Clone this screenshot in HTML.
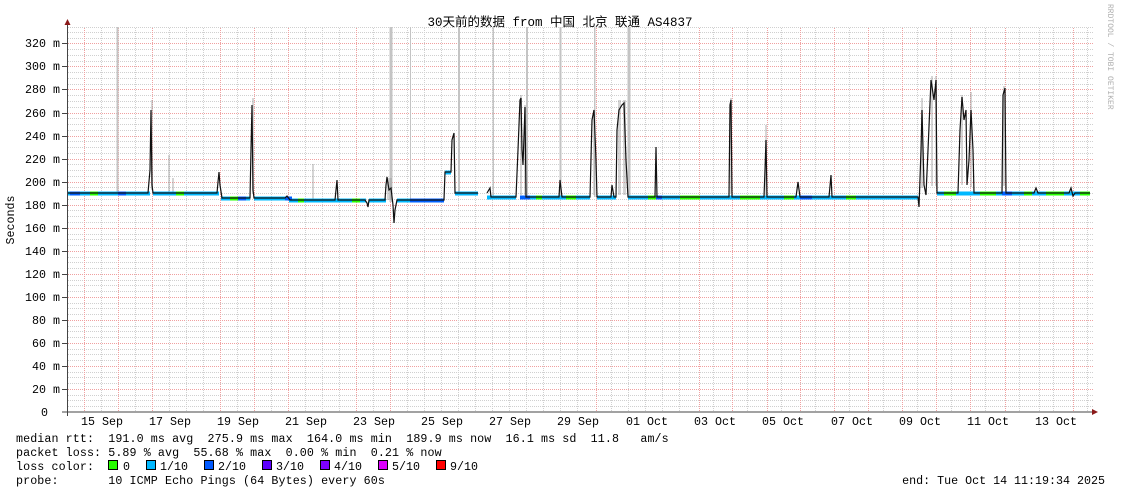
<!DOCTYPE html>
<html><head><meta charset="utf-8"><style>
html,body{margin:0;padding:0;background:#fff;}
svg{display:block}
text{font-family:"Liberation Mono","DejaVu Sans Mono","Noto Sans CJK SC",monospace;font-size:11.67px;fill:#000}
.lg{letter-spacing:0.1px}
</style></head><body>
<svg width="1121" height="494" viewBox="0 0 1121 494" xmlns="http://www.w3.org/2000/svg">
<defs>
<pattern id="hg" width="2" height="1" patternUnits="userSpaceOnUse"><rect width="1" height="1" fill="#d0d0d0"/></pattern>
<pattern id="vg" width="1" height="2" patternUnits="userSpaceOnUse"><rect width="1" height="1" fill="#d0d0d0"/></pattern>
<pattern id="hr" width="2" height="1" patternUnits="userSpaceOnUse"><rect width="1" height="1" fill="#f0a0a0"/></pattern>
<pattern id="vr" width="1" height="2" patternUnits="userSpaceOnUse"><rect width="1" height="1" fill="#f0a0a0"/></pattern>
</defs>
<g id="grid">
<g fill="url(#hg)">
<rect x="67" y="406" width="1026" height="1"/><rect x="67" y="400" width="1026" height="1"/><rect x="67" y="395" width="1026" height="1"/>
<rect x="67" y="383" width="1026" height="1"/><rect x="67" y="377" width="1026" height="1"/><rect x="67" y="372" width="1026" height="1"/>
<rect x="67" y="360" width="1026" height="1"/><rect x="67" y="354" width="1026" height="1"/><rect x="67" y="349" width="1026" height="1"/>
<rect x="67" y="337" width="1026" height="1"/><rect x="67" y="331" width="1026" height="1"/><rect x="67" y="326" width="1026" height="1"/>
<rect x="67" y="314" width="1026" height="1"/><rect x="67" y="308" width="1026" height="1"/><rect x="67" y="303" width="1026" height="1"/>
<rect x="67" y="291" width="1026" height="1"/><rect x="67" y="285" width="1026" height="1"/><rect x="67" y="280" width="1026" height="1"/>
<rect x="67" y="268" width="1026" height="1"/><rect x="67" y="262" width="1026" height="1"/><rect x="67" y="257" width="1026" height="1"/>
<rect x="67" y="245" width="1026" height="1"/><rect x="67" y="239" width="1026" height="1"/><rect x="67" y="234" width="1026" height="1"/>
<rect x="67" y="222" width="1026" height="1"/><rect x="67" y="216" width="1026" height="1"/><rect x="67" y="210" width="1026" height="1"/>
<rect x="67" y="199" width="1026" height="1"/><rect x="67" y="193" width="1026" height="1"/><rect x="67" y="187" width="1026" height="1"/>
<rect x="67" y="176" width="1026" height="1"/><rect x="67" y="170" width="1026" height="1"/><rect x="67" y="164" width="1026" height="1"/>
<rect x="67" y="153" width="1026" height="1"/><rect x="67" y="147" width="1026" height="1"/><rect x="67" y="141" width="1026" height="1"/>
<rect x="67" y="130" width="1026" height="1"/><rect x="67" y="124" width="1026" height="1"/><rect x="67" y="118" width="1026" height="1"/>
<rect x="67" y="107" width="1026" height="1"/><rect x="67" y="101" width="1026" height="1"/><rect x="67" y="95" width="1026" height="1"/>
<rect x="67" y="84" width="1026" height="1"/><rect x="67" y="78" width="1026" height="1"/><rect x="67" y="72" width="1026" height="1"/>
<rect x="67" y="61" width="1026" height="1"/><rect x="67" y="55" width="1026" height="1"/><rect x="67" y="49" width="1026" height="1"/>
<rect x="67" y="38" width="1026" height="1"/><rect x="67" y="32" width="1026" height="1"/><rect x="67" y="27" width="1026" height="1"/>
</g>
<g fill="url(#hr)">
<rect x="67" y="389" width="1026" height="1"/><rect x="67" y="366" width="1026" height="1"/><rect x="67" y="343" width="1026" height="1"/>
<rect x="67" y="320" width="1026" height="1"/><rect x="67" y="297" width="1026" height="1"/><rect x="67" y="274" width="1026" height="1"/>
<rect x="67" y="251" width="1026" height="1"/><rect x="67" y="228" width="1026" height="1"/><rect x="67" y="205" width="1026" height="1"/>
<rect x="67" y="182" width="1026" height="1"/><rect x="67" y="159" width="1026" height="1"/><rect x="67" y="136" width="1026" height="1"/>
<rect x="67" y="113" width="1026" height="1"/><rect x="67" y="89" width="1026" height="1"/><rect x="67" y="66" width="1026" height="1"/>
<rect x="67" y="43" width="1026" height="1"/>
</g>
<g fill="url(#vg)">
<rect x="101" y="27" width="1" height="385"/><rect x="135" y="27" width="1" height="385"/><rect x="169" y="27" width="1" height="385"/>
<rect x="203" y="27" width="1" height="385"/><rect x="237" y="27" width="1" height="385"/><rect x="271" y="27" width="1" height="385"/>
<rect x="305" y="27" width="1" height="385"/><rect x="339" y="27" width="1" height="385"/><rect x="373" y="27" width="1" height="385"/>
<rect x="407" y="27" width="1" height="385"/><rect x="441" y="27" width="1" height="385"/><rect x="475" y="27" width="1" height="385"/>
<rect x="509" y="27" width="1" height="385"/><rect x="543" y="27" width="1" height="385"/><rect x="577" y="27" width="1" height="385"/>
<rect x="611" y="27" width="1" height="385"/><rect x="645" y="27" width="1" height="385"/><rect x="679" y="27" width="1" height="385"/>
<rect x="713" y="27" width="1" height="385"/><rect x="747" y="27" width="1" height="385"/><rect x="781" y="27" width="1" height="385"/>
<rect x="815" y="27" width="1" height="385"/><rect x="849" y="27" width="1" height="385"/><rect x="883" y="27" width="1" height="385"/>
<rect x="917" y="27" width="1" height="385"/><rect x="951" y="27" width="1" height="385"/><rect x="985" y="27" width="1" height="385"/>
<rect x="1019" y="27" width="1" height="385"/><rect x="1053" y="27" width="1" height="385"/><rect x="1087" y="27" width="1" height="385"/>
<rect x="186" y="27" width="1" height="385"/><rect x="322" y="27" width="1" height="385"/><rect x="424" y="27" width="1" height="385"/><rect x="458" y="27" width="1" height="385"/><rect x="492" y="27" width="1" height="385"/><rect x="526" y="27" width="1" height="385"/><rect x="560" y="27" width="1" height="385"/><rect x="628" y="27" width="1" height="385"/><rect x="662" y="27" width="1" height="385"/><rect x="1039" y="27" width="1" height="385"/>
</g>
<g fill="url(#vr)">
<rect x="84" y="27" width="1" height="385"/><rect x="118" y="27" width="1" height="385"/><rect x="152" y="27" width="1" height="385"/>
<rect x="220" y="27" width="1" height="385"/><rect x="254" y="27" width="1" height="385"/><rect x="288" y="27" width="1" height="385"/>
<rect x="356" y="27" width="1" height="385"/><rect x="390" y="27" width="1" height="385"/>
<rect x="596" y="27" width="1" height="385"/><rect x="699" y="27" width="1" height="385"/><rect x="732" y="27" width="1" height="385"/>
<rect x="767" y="27" width="1" height="385"/><rect x="800" y="27" width="1" height="385"/><rect x="834" y="27" width="1" height="385"/>
<rect x="868" y="27" width="1" height="385"/><rect x="902" y="27" width="1" height="385"/><rect x="936" y="27" width="1" height="385"/>
<rect x="970" y="27" width="1" height="385"/><rect x="1005" y="27" width="1" height="385"/><rect x="1073" y="27" width="1" height="385"/>
</g>
</g>
<g fill="#c4c4c4">
<rect x="116.5" y="27" width="2" height="166"/><rect x="389.5" y="27" width="3" height="175"/><rect x="410" y="27" width="1" height="173"/>
<rect x="458" y="27" width="2" height="166"/><rect x="492.5" y="27" width="1.5" height="170"/><rect x="526" y="27" width="2" height="170"/>
<rect x="559.5" y="27" width="2" height="170"/><rect x="594" y="27" width="1.5" height="170"/><rect x="627.5" y="27" width="3" height="170"/>
</g>
<g fill="#999" opacity="0.4">
<rect x="151" y="100" width="2" height="90"/><rect x="252" y="98" width="2" height="95"/><rect x="168" y="155" width="2" height="38"/><rect x="172" y="178" width="2" height="15"/>
<rect x="312" y="164" width="2" height="35"/><rect x="387" y="178" width="5" height="22"/><rect x="520" y="95" width="2" height="100"/><rect x="524" y="105" width="2" height="90"/>
<rect x="593" y="110" width="2" height="85"/><rect x="618" y="100" width="3" height="95"/><rect x="623" y="100" width="3" height="95"/><rect x="730" y="98" width="2" height="95"/>
<rect x="765" y="125" width="2" height="70"/><rect x="921" y="98" width="2" height="90"/><rect x="931" y="76" width="2" height="110"/><rect x="935" y="76" width="2" height="110"/>
<rect x="961" y="95" width="2" height="90"/><rect x="970" y="92" width="2" height="95"/><rect x="1003" y="86" width="2" height="100"/>
</g>
<g fill="none" stroke-width="4" transform="translate(0,0.5)">
<path stroke="#00b8ff" d="M67,193H150M153,193H219M221,198H250M254,198H287M289,200H366M369,200H386M397,200H444M445,172H451M455,193H478M487,197H516M526,197H590M597,197H616M628,197H918M937,193H1090"/>
<path stroke="#0060ff" d="M70,193H80M118,193H126M236,198H246M285,198H292M410,200H444M520,197H530M656,197H662M800,197H812M1002,193H1012"/>
<path stroke="#26ff00" d="M90,193H98M176,193H184M230,198H238M298,200H304M352,200H360M536,197H542M566,197H576M648,197H656M680,197H700M740,197H760M784,197H794M846,197H856M944,193H956M980,193H996M1024,193H1032M1046,193H1064M1080,193H1090"/>
</g>
<path fill="none" stroke="#111" stroke-width="1.2" d="M67,193 H148 L150,170 L151,110 L152,185 L153,193 H217 L218,182 L219,172 L220,185 L222,198 H250 L251,150 L252,105 L253,190 L254,198 H285 L287,196 L290,200 H335 L337,180 L338,200 H365 L367,203 L368,207 L369,200 H385 L386,185 L387,177 L389,190 L391,188 L393,205 L394,223 L395,210 L397,200 H444 L445,172 H451 L452,140 L454,133 L455,193 H478 M487,193 L490,188 L491,197 H516 L518,150 L520,100 L521,98 L522,150 L523,165 L525,107 L526,197 H559 L560,180 L562,197 H590 L592,120 L594,110 L596,160 L597,197 H611 L612,185 L614,197 H616 L617,130 L619,110 L622,105 L624,103 L626,160 L628,197 H655 L656,147 L657,197 H729 L730,105 L731,100 L732,197 H764 L765,170 L766,140 L767,197 H796 L798,182 L800,197 H829 L831,175 L832,197 H918 L919,207 L921,150 L922,110 L924,185 L926,195 L928,150 L931,80 L934,100 L936,80 L937,193 H958 L960,130 L962,97 L964,120 L966,110 L967,185 L969,160 L971,110 L973,150 L974,193 H1002 L1003,95 L1005,88 L1006,193 H1034 L1036,188 L1038,193 H1069 L1071,188 L1073,196 L1075,193 H1090"/>
<rect x="67" y="24" width="1" height="392" fill="#444"/>
<rect x="62" y="411.5" width="1031" height="1" fill="#444"/>
<path d="M64.5,25 L67.5,19 L70.5,25 Z" fill="#8b1a1a"/>
<path d="M1092,409 L1098,412 L1092,415 Z" fill="#8b1a1a"/>
<g fill="#444">
<rect x="62" y="43" width="5" height="1"/><rect x="62" y="66" width="5" height="1"/><rect x="62" y="89" width="5" height="1"/><rect x="62" y="113" width="5" height="1"/><rect x="62" y="136" width="5" height="1"/><rect x="62" y="159" width="5" height="1"/><rect x="62" y="182" width="5" height="1"/><rect x="62" y="205" width="5" height="1"/><rect x="62" y="228" width="5" height="1"/><rect x="62" y="251" width="5" height="1"/><rect x="62" y="274" width="5" height="1"/><rect x="62" y="297" width="5" height="1"/><rect x="62" y="320" width="5" height="1"/><rect x="62" y="343" width="5" height="1"/><rect x="62" y="366" width="5" height="1"/><rect x="62" y="389" width="5" height="1"/>
</g>
<g text-anchor="end">
<text x="60" y="47">320 m</text><text x="60" y="70">300 m</text><text x="60" y="93">280 m</text><text x="60" y="117">260 m</text>
<text x="60" y="140">240 m</text><text x="60" y="163">220 m</text><text x="60" y="186">200 m</text><text x="60" y="209">180 m</text>
<text x="60" y="232">160 m</text><text x="60" y="255">140 m</text><text x="60" y="278">120 m</text><text x="60" y="301">100 m</text>
<text x="60" y="324">80 m</text><text x="60" y="347">60 m</text><text x="60" y="370">40 m</text><text x="60" y="393">20 m</text>
<text x="48" y="416">0</text>
</g>
<text transform="translate(14,220) rotate(-90)" text-anchor="middle">Seconds</text>
<g text-anchor="middle">
<text x="102" y="425">15 Sep</text><text x="170" y="425">17 Sep</text><text x="238" y="425">19 Sep</text><text x="306" y="425">21 Sep</text>
<text x="374" y="425">23 Sep</text><text x="442" y="425">25 Sep</text><text x="510" y="425">27 Sep</text><text x="578" y="425">29 Sep</text>
<text x="647" y="425">01 Oct</text><text x="715" y="425">03 Oct</text><text x="783" y="425">05 Oct</text><text x="852" y="425">07 Oct</text>
<text x="920" y="425">09 Oct</text><text x="988" y="425">11 Oct</text><text x="1056" y="425">13 Oct</text>
</g>
<text x="560" y="26" text-anchor="middle" style="font-size:12.5px">30天前的数据 from 中国 北京 联通 AS4837</text>
<text transform="translate(1108,4) rotate(90)" style="font-size:8px;fill:#b0b0b0">RRDTOOL / TOBI OETIKER</text>
<text class="lg" x="16" y="442" xml:space="preserve">median rtt:  191.0 ms avg  275.9 ms max  164.0 ms min  189.9 ms now  16.1 ms sd  11.8   am/s</text>
<text class="lg" x="16" y="456" xml:space="preserve">packet loss: 5.89 % avg  55.68 % max  0.00 % min  0.21 % now</text>
<text class="lg" x="16" y="470" xml:space="preserve">loss color:</text>
<text class="lg" x="16" y="484" xml:space="preserve">probe:       10 ICMP Echo Pings (64 Bytes) every 60s</text>
<text x="1105" y="484" text-anchor="end">end: Tue Oct 14 11:19:34 2025</text>
<g stroke="#000" stroke-width="1">
<rect x="108.5" y="460.5" width="9" height="9" fill="#26ff00"/>
<rect x="146.5" y="460.5" width="9" height="9" fill="#00b8ff"/>
<rect x="204.5" y="460.5" width="9" height="9" fill="#0059ff"/>
<rect x="262.5" y="460.5" width="9" height="9" fill="#5e00ff"/>
<rect x="320.5" y="460.5" width="9" height="9" fill="#7e00ff"/>
<rect x="378.5" y="460.5" width="9" height="9" fill="#dd00ff"/>
<rect x="436.5" y="460.5" width="9" height="9" fill="#ff0000"/>
</g>
<text x="123" y="470">0</text><text x="160" y="470">1/10</text><text x="218" y="470">2/10</text><text x="276" y="470">3/10</text>
<text x="334" y="470">4/10</text><text x="392" y="470">5/10</text><text x="450" y="470">9/10</text>
</svg>
</body></html>
